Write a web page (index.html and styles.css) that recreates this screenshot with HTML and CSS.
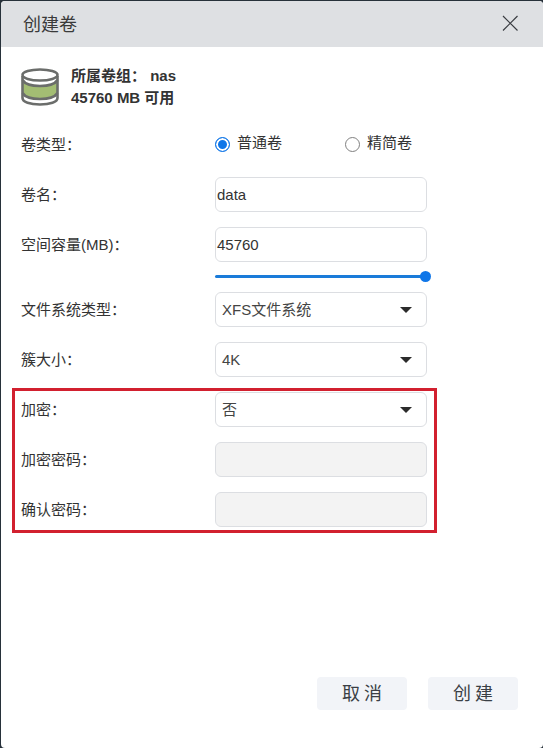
FILE: index.html
```html
<!DOCTYPE html>
<html lang="zh-CN">

<head>
    <meta charset="UTF-8">
    <meta name="viewport" content="width=device-width, initial-scale=1.0">
    <title>创建卷</title>
    <link rel="stylesheet" href="styles.css">
</head>

<body>
    <div class="dialog">
        <div class="dialog-header">
            <span class="dialog-title">创建卷</span>
            <svg class="close-icon" width="18" height="18" viewBox="0 0 18 18">
                <path d="M2 2 L16.5 16.5 M16.5 2 L2 16.5" stroke="#3a3d42" stroke-width="1.2" fill="none" />
            </svg>
        </div>

        <div class="dialog-body">
            <div class="volume-info">
                <svg class="volume-icon" width="38" height="38" viewBox="0 0 38 38">
                    <path d="M1.5 12 C4 16 11 18 19 18 C27 18 34 16 36.5 12 V25 C34 29 27 31 19 31 C11 31 4 29 1.5 25 Z" fill="#a3bd73" />
                    <path d="M1.5 8 V30 C1.5 34 9 36.5 19 36.5 C29 36.5 36.5 34 36.5 30 V8" fill="none" stroke="#6b6d6b" stroke-width="2.6" />
                    <ellipse cx="19" cy="7" rx="17.5" ry="5.5" fill="#fff" stroke="#6b6d6b" stroke-width="2.6" />
                    <path d="M1.5 12 C4 16 11 18 19 18 C27 18 34 16 36.5 12" fill="none" stroke="#6b6d6b" stroke-width="2.6" />
                    <path d="M1.5 25 C4 29 11 31 19 31 C27 31 34 29 36.5 25" fill="none" stroke="#6b6d6b" stroke-width="2.6" />
                </svg>
                <div class="volume-text">
                    <div>所属卷组：&nbsp;nas</div>
                    <div>45760 MB 可用</div>
                </div>
            </div>

            <div class="form-row radio-row">
                <span class="form-label">卷类型：</span>
                <div class="radio-group">
                    <span class="radio-item radio-first"><i class="radio checked"></i>普通卷</span>
                    <span class="radio-item"><i class="radio"></i>精简卷</span>
                </div>
            </div>

            <div class="form-row name-row">
                <span class="form-label">卷名：</span>
                <div class="input">data</div>
            </div>

            <div class="form-row">
                <span class="form-label">空间容量(MB)：</span>
                <div class="input">45760</div>
            </div>
            <div class="slider"><i class="slider-knob"></i></div>

            <div class="form-row fs-row">
                <span class="form-label">文件系统类型：</span>
                <div class="input select">XFS文件系统<i class="caret"></i></div>
            </div>

            <div class="form-row">
                <span class="form-label">簇大小：</span>
                <div class="input select">4K<i class="caret"></i></div>
            </div>

            <div class="encrypt-box">
                <div class="form-row">
                    <span class="form-label">加密：</span>
                    <div class="input select">否<i class="caret"></i></div>
                </div>
                <div class="form-row">
                    <span class="form-label">加密密码：</span>
                    <div class="input disabled"></div>
                </div>
                <div class="form-row">
                    <span class="form-label">确认密码：</span>
                    <div class="input disabled"></div>
                </div>
            </div>
        </div>

        <div class="dialog-footer">
            <button class="btn">取消</button>
            <button class="btn">创建</button>
        </div>
    </div>
</body>

</html>
```

FILE: styles.css
```css
* {
    box-sizing: border-box;
}

html,
body {
    margin: 0;
    height: 100%;
    background-color: #27313a;
    overflow: hidden;
}

body {
    padding: 1px 0 0 1px;
    font-family: "Liberation Sans", "Noto Sans CJK SC", sans-serif;
    font-size: 15px;
    color: #333;
}

.dialog {
    display: flex;
    flex-direction: column;
    height: 100%;
    background-color: #fff;
    border-radius: 4px;
    overflow: hidden;
}

.dialog-header {
    display: flex;
    align-items: center;
    justify-content: space-between;
    flex: none;
    height: 46px;
    padding: 0 24px 2px 22px;
    background-color: #dee0e3;
}

.dialog-title {
    font-size: 18px;
    color: #3a3a3a;
}

.close-icon {
    display: block;
}

.dialog-body {
    flex: 1;
    padding: 0 0 0 20px;
}

.volume-info {
    display: flex;
    align-items: center;
    height: 38px;
    margin-top: 21px;
}

.volume-icon {
    display: block;
    flex: none;
    margin-right: 12px;
}

.volume-text {
    font-weight: bold;
    line-height: 22px;
    color: #333;
}

.form-row {
    display: flex;
    align-items: center;
    width: 406px;
    height: 35px;
    margin-top: 15px;
}

.radio-row {
    height: 24px;
    margin-top: 26px;
}

.name-row {
    margin-top: 21px;
}

.fs-row {
    margin-top: 14px;
}

.form-label {
    flex: none;
    width: 194px;
    padding-bottom: 2px;
}

.radio-group {
    display: flex;
}

.radio-item {
    display: flex;
    align-items: center;
    color: #333;
    line-height: 20px;
    padding-bottom: 2px;
}

.radio-first {
    width: 130px;
}

.radio {
    display: block;
    width: 15px;
    height: 15px;
    margin: 2px 7px 0 0;
    border: 1px solid #808080;
    border-radius: 50%;
    background-color: #fff;
}

.radio.checked {
    border-color: #0f76e8;
    background-color: #0f76e8;
    box-shadow: inset 0 0 0 2px #fff;
}

.input {
    position: relative;
    flex: none;
    width: 212px;
    height: 35px;
    padding: 0 2px 0 1px;
    border: 1px solid #dcdee2;
    border-radius: 6px;
    background-color: #fff;
    line-height: 33px;
}

.select {
    padding: 0 6px;
    color: #444;
}

.disabled {
    background-color: #f3f3f3;
}

.caret {
    position: absolute;
    top: 14px;
    right: 14px;
    width: 0;
    height: 0;
    border-top: 6px solid #2b2b2b;
    border-left: 6.5px solid transparent;
    border-right: 6.5px solid transparent;
}

.slider {
    position: relative;
    width: 211px;
    height: 3px;
    margin: 13px 0 0 194px;
    background-color: #1a7bd9;
    border-radius: 2px;
}

.slider-knob {
    position: absolute;
    top: -4px;
    right: -5px;
    width: 11px;
    height: 11px;
    border-radius: 50%;
    background-color: #0f76e8;
}

.encrypt-box {
    width: 425px;
    height: 145px;
    margin: 11px 0 0 -9px;
    padding: 0 0 0 6px;
    border: 3px solid #d2202f;
}

.encrypt-box .form-row:first-child {
    margin-top: 1px;
}

.dialog-footer {
    display: flex;
    justify-content: flex-end;
    flex: none;
    gap: 21px;
    padding: 0 25px 38px 0;
}

.btn {
    width: 90px;
    height: 33px;
    padding: 0 0 3px 4px;
    border: none;
    border-radius: 4px;
    background-color: #f2f4f8;
    font-family: "Liberation Sans", "Noto Sans CJK SC", sans-serif;
    font-size: 18px;
    letter-spacing: 4px;
    color: #3a3f45;
}
```
